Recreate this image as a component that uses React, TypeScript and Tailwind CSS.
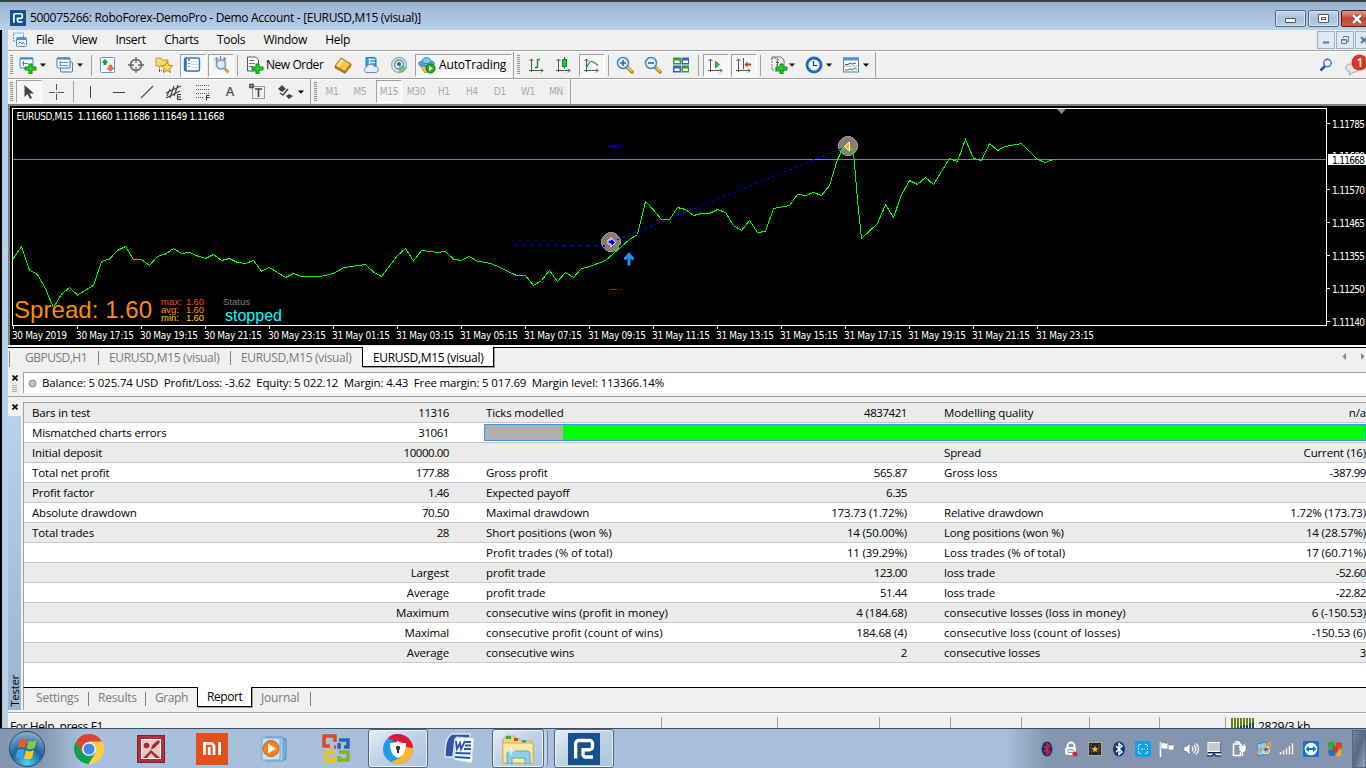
import type { ReactNode } from "react";

// ── Data ──────────────────────────────────────────────────────

const MENU = ["File", "View", "Insert", "Charts", "Tools", "Window", "Help"];

const PERIODS = ["M1", "M5", "M15", "M30", "H1", "H4", "D1", "W1", "MN"];

const REPORT: string[][] = [
  ["Bars in test", "11316", "Ticks modelled", "4837421", "Modelling quality", "n/a"],
  ["Mismatched charts errors", "31061", "", "", "", ""],
  ["Initial deposit", "10000.00", "", "", "Spread", "Current (16)"],
  ["Total net profit", "177.88", "Gross profit", "565.87", "Gross loss", "-387.99"],
  ["Profit factor", "1.46", "Expected payoff", "6.35", "", ""],
  ["Absolute drawdown", "70.50", "Maximal drawdown", "173.73 (1.72%)", "Relative drawdown", "1.72% (173.73)"],
  ["Total trades", "28", "Short positions (won %)", "14 (50.00%)", "Long positions (won %)", "14 (28.57%)"],
  ["", "", "Profit trades (% of total)", "11 (39.29%)", "Loss trades (% of total)", "17 (60.71%)"],
  ["", "Largest", "profit trade", "123.00", "loss trade", "-52.60"],
  ["", "Average", "profit trade", "51.44", "loss trade", "-22.82"],
  ["", "Maximum", "consecutive wins (profit in money)", "4 (184.68)", "consecutive losses (loss in money)", "6 (-150.53)"],
  ["", "Maximal", "consecutive profit (count of wins)", "184.68 (4)", "consecutive loss (count of losses)", "-150.53 (6)"],
  ["", "Average", "consecutive wins", "2", "consecutive losses", "3"],
];

const TIMES = [
  "30 May 2019", "30 May 17:15", "30 May 19:15", "30 May 21:15", "30 May 23:15", "31 May 01:15",
  "31 May 03:15", "31 May 05:15", "31 May 07:15", "31 May 09:15", "31 May 11:15", "31 May 13:15",
  "31 May 15:15", "31 May 17:15", "31 May 19:15", "31 May 21:15", "31 May 23:15",
];

const PRICES: [string, number][] = [
  ["1.11785", 124], ["1.11570", 190], ["1.11465", 223], ["1.11355", 256], ["1.11250", 289], ["1.11140", 322],
];

const LINE =
  "13,259 21.5,246.5 29.5,270 37.5,274.5 45.5,288.5 53.5,308 61.5,294 69.5,287.5 77.5,295 93.5,285.5 101.5,261.5 109.5,259 117.5,250.5 125.5,246.5 133.5,259.5 141.5,259.5 149.5,265.5 157.5,256.5 165.5,254 173.5,248.5 181.5,253.5 189.5,252.5 197.5,256 205.5,258.5 213.5,254.5 221.5,260.5 229.5,258.5 237.5,262.5 245.5,263.5 253.5,260.5 261.5,271 269.5,267.5 285.5,277.5 293.5,273.5 301.5,276.5 320,276.5 333.5,273.5 344,267.5 365.5,264.5 373.5,272 381.5,276.5 397.5,255.5 405.5,248.5 413.5,261 421.5,250.5 437.5,252.5 445.5,251.5 453.5,259 461,260.5 469,256.5 477,261 491,263.5 500,267.5 516.5,275.5 525.5,275.5 533.5,285.5 541.5,280.5 549.5,270.5 557.5,281.5 565.5,272.5 573.5,277.5 581.5,268.5 590,266.5 605.5,260.5 621.5,246.5 629.5,239.5 637.5,234.5 645.5,201.5 653.5,210 661.5,219.5 669.5,219.5 677.5,207.5 685.5,209.5 693.5,215.5 701.5,213.5 709.5,213.5 717.5,209.5 725.5,212.5 733.5,225.5 741.5,230.5 749.5,220.5 757.5,232.5 765.5,231.5 773.5,208.5 789.5,205.5 797.5,194.5 805.5,195.5 813.5,192.5 821.5,195.5 829.5,185.5 837.5,159.5 843.5,147.5 850,147.5 853.5,151.5 857.5,200 861.5,238.5 877.5,223.5 885.5,204.5 893.5,217.5 901.5,195 909.5,180.5 917.5,184.5 925.5,177.5 933.5,184.5 949.5,158.5 957.5,161.5 965.5,139.5 973.5,158.5 981.5,160.5 989.5,143.5 997.5,150.5 1005,146.5 1021.5,143.5 1037.5,159.5 1045.5,162.5 1053,159.5";

// ── Small building blocks ─────────────────────────────────────

function Ico({ className = "", size = 18, children }: { className?: string; size?: number; children: ReactNode }) {
  return (
    <svg width={size} height={size} viewBox={`0 0 ${size} ${size}`} fill="none" className={`shrink-0 ${className}`}>
      {children}
    </svg>
  );
}

function Grip({ className = "" }: { className?: string }) {
  return (
    <svg width="3" height="20" className={`shrink-0 ${className}`}>
      <path d="M1.5 0V20" stroke="#909090" strokeWidth="3" strokeDasharray="1 1" />
    </svg>
  );
}

function Sep({ className = "" }: { className?: string }) {
  return <div className={`h-[21px] w-px shrink-0 bg-[#a0a0a0] ${className}`} />;
}

function Caret({ className = "" }: { className?: string }) {
  return (
    <svg width="6" height="4" className={`shrink-0 ${className}`}>
      <path d="M0 .5H6L3 3.8Z" fill="#000" />
    </svg>
  );
}

function Pressed({ className = "", children }: { className?: string; children: ReactNode }) {
  return (
    <div className={`flex h-[23px] shrink-0 items-center justify-center border border-t-[#a0a0a0] border-r-white border-b-white border-l-[#a0a0a0] bg-[#f6f6f6] ${className}`}>
      {children}
    </div>
  );
}

const PLUS = "M10 8h3v3h4v3h-4v4h-3v-4H6v-3h4z";

function Plus() {
  return <path d={PLUS} fill="#25d325" stroke="#07890b" strokeWidth="1" />;
}

// L shaped axes shared by the chart type buttons
function Axes() {
  return <path d="M3.500 3v13M1 14.500h14M1.500 5l2-2 2 2M13 12.500l2 2-2 2" stroke="#555" />;
}

function RLogo({ size }: { size: number }) {
  return (
    <svg width={size} height={size} viewBox="0 0 32 32" className="shrink-0">
      <rect width="32" height="32" rx="1" fill="#15518f" />
      <path
        d="M7.700 25.500V10.500a3 3 0 0 1 3-3H21.500a3 3 0 0 1 3 3v3.300a3 3 0 0 1-3 3H15V21.500a2.500 2.500 0 0 0 2.500 2.500H25"
        fill="none"
        stroke="#fff"
        strokeWidth="3.400"
      />
    </svg>
  );
}

function Magnifier({ minus = false }: { minus?: boolean }) {
  return (
    <>
      <path d="M11 11l5 5" stroke="#b8860b" strokeWidth="3.500" strokeLinecap="round" />
      <path d="M11.500 11l4.500 4.500" stroke="#f6d35a" strokeWidth="1.500" />
      <circle cx="7" cy="7" r="5.500" fill="#e4f2ff" stroke="#3b86d6" strokeWidth="1.500" />
      <path d={minus ? "M4 7h6" : "M4 7h6M7 4v6"} stroke="#2468b8" strokeWidth="1.600" />
    </>
  );
}

// ── Window chrome ─────────────────────────────────────────────

function TitleBar() {
  return (
    <div className="flex h-[30px] shrink-0 border-t-2 border-[#3a4048] bg-linear-to-b from-[#98b3d1] to-[#b9d1ea]">
      <div className="ml-[10px] flex h-[32px] items-center">
        <RLogo size={16} />
        <span className="ml-1 whitespace-nowrap text-[12px] tracking-[-0.32px]">
          500075266: RoboForex-DemoPro - Demo Account - [EURUSD,M15 (visual)]
        </span>
      </div>
      <div className="-mr-[7px] ml-auto mt-2 flex gap-[2px]">
        <div className="flex h-[17px] w-[31px] items-center justify-center rounded-[2px] border border-[#56687e] bg-linear-to-b from-[#c4d7ea] via-[#a9c1dc] to-[#b6cfe9] shadow-[inset_0_0_0_1px_#d5e4f2]">
          <div className="mt-1 h-[5px] w-[11px] rounded-[1px] border border-[#555] bg-white" />
        </div>
        <div className="flex h-[17px] w-[31px] items-center justify-center rounded-[2px] border border-[#56687e] bg-linear-to-b from-[#c4d7ea] via-[#a9c1dc] to-[#b6cfe9] shadow-[inset_0_0_0_1px_#d5e4f2]">
          <div className="flex h-[9px] w-[11px] items-center justify-center rounded-[1px] border border-[#555] bg-white">
            <div className="h-[3px] w-[5px] border border-[#555]" />
          </div>
        </div>
        <div className="flex h-[17px] w-[32px] items-center justify-center rounded-[2px] border border-[#5b1a14] bg-linear-to-b from-[#dd9a8c] via-[#c5432d] to-[#d0604a]">
          <svg width="12" height="10" viewBox="0 0 12 10">
            <path d="M2 1l8 8M10 1L2 9" stroke="#444" strokeWidth="4" />
            <path d="M2 1l8 8M10 1L2 9" stroke="#fff" strokeWidth="2.500" />
          </svg>
        </div>
      </div>
    </div>
  );
}

function MdiButton({ children }: { children: ReactNode }) {
  return (
    <div className="flex h-[18px] w-[18px] items-center justify-center border border-[#9aaec0] bg-[#dfe9f3]">
      <svg width="10" height="10" fill="none" stroke="#65788c">{children}</svg>
    </div>
  );
}

function MenuBar() {
  return (
    <div className="flex h-[21px] shrink-0 items-center border-b border-[#a0a0a0]">
      <Ico size={16} className="ml-1">
        <rect x="1.500" y="1" width="10" height="8" fill="#eaf3ff" stroke="#4f8fe0" strokeDasharray="2 1" />
        <rect x="4.500" y="5.500" width="10" height="9" rx="1" fill="#fff" stroke="#4f8fe0" />
        <path d="M5 7h9" stroke="#4f8fe0" strokeWidth="2" />
        <path d="M6 12l2-2 2 2 1-2 2 3" stroke="#4f8fe0" />
      </Ico>
      <div className="ml-2 flex gap-[18.5px] text-[12px] tracking-[-0.35px]">
        {MENU.map(m => <span key={m}>{m}</span>)}
      </div>
      <div className="-mr-[7px] ml-auto flex gap-px">
        <MdiButton><path d="M2 7.500h6" strokeWidth="2" /></MdiButton>
        <MdiButton><path d="M3.500 3V1.500h5v5H7M1.500 4.500h5v4h-5zM1 5h6" /></MdiButton>
        <MdiButton><path d="M2 2l6 6M8 2L2 8" strokeWidth="2" /></MdiButton>
      </div>
    </div>
  );
}

function MainToolbar() {
  return (
    <div className="flex h-[27px] shrink-0 items-center border-t border-white pr-px">
      <Grip className="ml-[2px]" />
      <Ico className="ml-[6px]">
        <rect x="1" y="2" width="13" height="10" rx="1" fill="#f4faff" stroke="#3d8ac7" />
        <path d="M1 2.500h13" stroke="#3d8ac7" strokeWidth="2" />
        <path d="M4.500 5v5M3 7.500h6" stroke="#5580a5" />
        <Plus />
      </Ico>
      <Caret className="ml-[3px]" />
      <Ico className="ml-[10px]">
        <rect x="4.500" y="6" width="12" height="10" rx="1" fill="#e4f1ff" stroke="#3d7fc0" />
        <rect x="1" y="2" width="13" height="10" rx="1" fill="#f4faff" stroke="#3d7fc0" />
        <path d="M1 2.500h13" stroke="#3d8ac7" strokeWidth="2" />
        <path d="M4.500 5v5M3 6.500h9M3 9.500h9" stroke="#7090b5" />
      </Ico>
      <Caret className="ml-[3px]" />
      <Sep className="ml-[8px]" />
      <Ico className="ml-[7px]">
        <rect x="1.500" y="1.500" width="14" height="15" rx="1" fill="#fff" stroke="#5c98d4" />
        <path d="M3 4h11M3 7h11M3 10h11M3 13h11" stroke="#d8e6f5" />
        <path d="M6 3l3.500 3.500H7.500v2.500h-3V6.500H2.500z" fill="#18a32b" />
        <path d="M11.500 15.500L8 12h2V9h3v3h2z" fill="#f17a4b" stroke="#cf481e" strokeWidth=".6" />
      </Ico>
      <Ico className="ml-[10px]">
        <circle cx="9" cy="9" r="5.500" stroke="#666" strokeWidth="1.500" />
        <path d="M9 1v6M9 11v6M1 9h6M11 9h6" stroke="#666" strokeWidth="1.300" />
      </Ico>
      <Ico className="ml-[10px]">
        <path d="M1 2h5l1 2h6v6H1z" fill="#f7dc70" stroke="#c99a1e" />
        <path d="M4.500 11v6M4 14.500h5" stroke="#555" strokeDasharray="1 1" />
        <path d="M12 5.500l1.700 3.700 4 .5-3 2.700.8 4.100-3.500-2-3.500 2 .8-4.100-3-2.700 4-.5z" fill="#fbdc55" stroke="#b9851c" />
      </Ico>
      <Pressed className="ml-[7px] w-[26px]">
        <Ico className="-ml-[2px]">
          <rect x="1.500" y="2" width="15" height="13" rx="1.500" fill="#fff" stroke="#2f77bd" strokeWidth="1.400" />
          <path d="M2.500 2.500v12" stroke="#2f77bd" strokeWidth="2.500" />
          <path d="M6 4v9" stroke="#222" strokeDasharray="1 2" />
          <path d="M5 3.500h2" stroke="#e33" />
          <path d="M8 5.500h8M8 8.500h8M8 11.500h8" stroke="#cfe0f3" />
        </Ico>
      </Pressed>
      <Pressed className="ml-[2px] w-[26px]">
        <Ico>
          <path d="M2 1h13v11H2z" fill="#ececec" />
          <path d="M4.500 1v9M8.500 0v5M12.500 1v8M2.500 3h4M10.500 3h4" stroke="#8a8a8a" strokeWidth="1.200" />
          <path d="M12.500 12.500l4 4" stroke="#d39a20" strokeWidth="2.800" />
          <circle cx="9" cy="8.500" r="4.500" fill="#d8ebfc" fillOpacity=".9" stroke="#6b9fd0" strokeWidth="1.500" />
        </Ico>
      </Pressed>
      <Sep className="ml-[3px]" />
      <Ico className="ml-2">
        <path d="M1.500 1h8l3 3v11h-11z" fill="#fff" stroke="#555" />
        <path d="M3 4.500h5M3 7.500h6M3 10.500h4" stroke="#777" />
        <Plus />
      </Ico>
      <span className="ml-[2px] w-[58px] whitespace-nowrap text-[12px] tracking-[-0.45px]">New Order</span>
      <Ico className="ml-[10px]">
        <path d="M1 10L7 2l10 6-6 8z" fill="#f4c449" stroke="#a86a0c" />
        <path d="M1 10v2l10 5.500 6-7.500V8l-6 7.500z" fill="#c47f14" stroke="#96600d" strokeWidth=".6" />
        <path d="M7 3l3 1.800L5 11 2.500 9.500z" fill="#fbe28b" />
      </Ico>
      <Ico className="ml-[10px]">
        <path d="M4 1.500h9l1 1v8H4z" fill="#2f9be8" stroke="#1e78c4" />
        <path d="M7.500 2v7M8 3.500h5M8 6.500h5" stroke="#d6efff" strokeWidth="1.500" />
        <path d="M4 16.500a3 3 0 0 1 .5-5.500 4.500 4.500 0 0 1 8-.5 3 3 0 0 1 1.500 6z" fill="#e6edf8" stroke="#7289b5" />
      </Ico>
      <Ico className="ml-[10px]">
        <circle cx="9" cy="9" r="7.500" fill="#e0efdf" stroke="#94b8b0" strokeWidth="1.300" />
        <circle cx="9" cy="8.500" r="4.500" stroke="#5889b8" strokeWidth="1.300" />
        <circle cx="9" cy="8" r="2" fill="#2e68aa" />
        <path d="M9 9v8c4 0 7-3 8-6z" fill="#52b053" fillOpacity=".6" />
      </Ico>
      <Pressed className="ml-[7px] w-[97px] justify-start">
        <Ico className="ml-[2px]">
          <path d="M1 8l15 0-4 7-5 2z" fill="#f3cd53" stroke="#c0962c" />
          <ellipse cx="8.500" cy="7.500" rx="8" ry="3" fill="#52a9da" stroke="#2d82b8" />
          <path d="M4 6c0-6 9-6 9 0-2 2-7 2-9 0z" fill="#80caf0" stroke="#2d82b8" />
          <circle cx="12.500" cy="12.500" r="4.600" fill="#1cb01c" stroke="#087c0d" />
          <path d="M11 9.900v5.200l4-2.600z" fill="#fff" />
        </Ico>
        <span className="ml-[3px] whitespace-nowrap text-[12px] tracking-[-0.15px]">AutoTrading</span>
      </Pressed>
      <div className="ml-px h-[26px] w-px bg-[#a0a0a0]" />
      <Grip className="ml-[3px]" />
      <Ico className="ml-2"><Axes /><path d="M9.500 3v9M9.500 3.500H12M7 11.500h2.500" stroke="#1d8a2a" strokeWidth="1.400" /></Ico>
      <Ico className="ml-[9px]"><Axes /><path d="M9.500 1v12" stroke="#138a22" /><rect x="7.500" y="3.500" width="4" height="7" fill="#29c53a" stroke="#138a22" /></Ico>
      <Pressed className="ml-[6px] w-[26px]"><Ico><Axes /><path d="M3.500 12C7 3 9 4 15 9.500" stroke="#2f9a3c" strokeWidth="1.300" /></Ico></Pressed>
      <Sep className="ml-[3px]" />
      <Ico className="ml-[7px]"><Magnifier /></Ico>
      <Ico className="ml-[10px]"><Magnifier minus /></Ico>
      <Ico className="ml-[10px]">
        <path d="M1 1.500h8v7H1zM9.500 9.500h7.500v7H9.500z" fill="#3d9a2c" />
        <path d="M9.500 1.500h7.500v7H9.500zM1 9.500h8v7H1z" fill="#3563c9" />
        <path d="M2.500 4.500h5v2.500h-5zM11 4.500h5v2.500h-5zM2.500 12.500h5V15h-5zM11 12.500h5V15h-5z" fill="#fff" />
      </Ico>
      <Sep className="ml-2" />
      <Pressed className="ml-1 w-[26px]"><Ico><Axes /><path d="M8.500 5v7l4-3.500z" fill="#2cc03c" stroke="#138a22" strokeWidth=".7" /></Ico></Pressed>
      <Pressed className="ml-[2px] w-[26px]"><Ico><Axes /><path d="M8.500 2v11" stroke="#555" /><path d="M9.500 8.500l3-3v2h3.500v2h-3.500v2z" fill="#c33a1a" /></Ico></Pressed>
      <Sep className="ml-[3px]" />
      <Ico className="ml-[9px]">
        <path d="M2 4V1h9l3 3v11H5" fill="#fff" stroke="#666" />
        <path d="M2 2v12h5V2z" fill="#eee" stroke="#777" strokeDasharray="2 1" />
        <path d="M9.500 3.500c-2-1-2 1-2 2v5M6 6.500h3" stroke="#555" />
        <Plus />
      </Ico>
      <Caret className="ml-px" />
      <Ico className="ml-[10px]">
        <circle cx="9" cy="9" r="7" fill="#f8fcff" stroke="#1f68bd" strokeWidth="2.800" />
        <circle cx="9" cy="9" r="5" stroke="#8fb7dc" strokeWidth=".8" strokeDasharray="1 1.600" />
        <path d="M8.500 5v4.500H12" stroke="#333" strokeWidth="1.200" />
      </Ico>
      <Caret className="ml-[3px]" />
      <Ico className="ml-[10px]">
        <rect x="1.500" y="2" width="15" height="14" fill="#f7fbff" stroke="#4284c4" />
        <path d="M1 3h16" stroke="#4b97dc" strokeWidth="3" />
        <path d="M3 8.500h3l2-1.500 2 1 4-1" stroke="#a23a22" />
        <path d="M2 10h14" stroke="#9cb8d4" />
        <path d="M3 14h3l2-1.500 2 1.500 3-2 2 1.500" stroke="#2b8a37" />
      </Ico>
      <Caret className="ml-[3px]" />
      <div className="ml-[6px] h-[26px] w-px bg-[#a0a0a0]" />
      <Ico size={14} className="ml-auto mr-[11px]">
        <path d="M1.500 12.500L6 8" stroke="#2353c3" strokeWidth="2.500" />
        <circle cx="8.500" cy="5" r="3.700" fill="#f1f5ff" stroke="#3d6fda" strokeWidth="1.400" />
      </Ico>
      <svg width="22" height="22" viewBox="0 0 22 22" className="-mr-px shrink-0 overflow-hidden">
        <path d="M7 10c-6-1-8 7-1 8l-1 3 5-3c4 0 5-2 5-4z" fill="#e3e3e3" stroke="#aaa" />
        <circle cx="15.500" cy="8.500" r="8" fill="#dc3420" />
        <text x="12.500" y="13" fontSize="12" fill="#fff" fontFamily="Open Sans, sans-serif" fontWeight="600">1</text>
      </svg>
    </div>
  );
}

function DrawToolbar() {
  return (
    <div className="flex h-[26px] shrink-0 items-center border-t border-[#a0a0a0] shadow-[inset_0_1px_0_#fff]">
      <Grip className="ml-[2px]" />
      <Pressed className="ml-[3px] w-[26px]">
        <Ico className="-ml-px"><path d="M4.500 2v12l3-3 2.500 5 2-1-2.500-4.500H14z" fill="#444" /></Ico>
      </Pressed>
      <Ico className="ml-[6px]"><path d="M8.500 1v6M8.500 11v6M1 9.500h6M10 9.500h6M8.500 9v1" stroke="#555" /></Ico>
      <Sep className="ml-[7px]" />
      <Ico className="ml-2"><path d="M8.500 3v12" stroke="#444" /></Ico>
      <Ico className="ml-[10px]"><path d="M3 9.500h12" stroke="#444" /></Ico>
      <Ico className="ml-[10px]"><path d="M3 15L15 3" stroke="#555" strokeWidth="1.200" /></Ico>
      <Ico className="ml-[9px]">
        <path d="M1 10l15-7M1 15L15 8M5 15L9 3M9 13l4-11M2 13l3-7" stroke="#444" strokeWidth="1.200" />
        <path d="M16 11.500h-3.500v5H16M12.500 14H16" stroke="#333" />
      </Ico>
      <Ico className="ml-[11px]">
        <path d="M2 2.500h13M2 6.500h13M2 10.500h13M2 14.500h8" stroke="#555" strokeDasharray="1 1" />
        <path d="M15.500 12.500h-3v5M12.500 14.500h3" stroke="#333" />
      </Ico>
      <span className="ml-[10px] w-[16px] text-center text-[13px] font-semibold text-[#555]">A</span>
      <Ico className="ml-[11px]">
        <rect x="3.500" y="3.500" width="12" height="12" stroke="#444" strokeDasharray="1 1" />
        <path d="M1 1.500h3v3H1zM6 6h7M9.500 6v8" stroke="#444" strokeWidth="1.600" />
      </Ico>
      <Ico className="ml-[10px]">
        <path d="M1 6l4-4 4 4-4 3zM9 13l3-2 4 2-4 3z" fill="#444" />
        <path d="M3 10l3 2 5-6" stroke="#444" strokeWidth="1.500" />
      </Ico>
      <Caret className="ml-[3px]" />
      <div className="ml-[6px] h-[25px] w-px bg-[#a0a0a0]" />
      <Grip className="ml-[3px]" />
      <div className="ml-px flex font-['DejaVu_Sans_Condensed','DejaVu_Sans',sans-serif] text-[10px] tracking-[-0.2px] text-[#a9a9a9]">
        {PERIODS.map(p =>
          p === "M15" ? (
            <Pressed key={p} className="ml-[2px] w-[26px]">{p}</Pressed>
          ) : (
            <div key={p} className="flex w-7 items-center justify-center">{p}</div>
          )
        )}
      </div>
      <div className="h-[25px] w-px bg-[#a0a0a0]" />
    </div>
  );
}

// ── Chart ─────────────────────────────────────────────────────

function Chart() {
  return (
    <svg width="1358" height="243" viewBox="8 104 1358 243" className="block shrink-0" fontFamily="DejaVu Sans Condensed, DejaVu Sans, sans-serif" fontSize="10">
      <rect x="8" y="104" width="1358" height="243" fill="#808080" />
      <rect x="10" y="106" width="1356" height="239" fill="#000" />
      <path d="M8 345.500H1366" stroke="#f0f0f0" />
      <path d="M8 346.500H1366" stroke="#fff" />
      <path d="M12.500 325.500V108.500H1326.500V325.500H12" fill="none" stroke="#fff" shapeRendering="crispEdges" />
      <path d="M13 159.500H1326" stroke="#778899" />
      <path d="M1057 109h9l-4.500 5z" fill="#778899" />

      <g shapeRendering="crispEdges" fill="none">
        <circle cx="611" cy="242" r="9.500" fill="#8f7b69" stroke="#8796a5" />
        <circle cx="848" cy="146" r="9.500" fill="#8f7b69" stroke="#8796a5" />
        <path d="M515 245H559" stroke="#0000ff" strokeWidth="2" strokeDasharray="2 6" />
        <path d="M563 246H620" stroke="#0000ff" strokeWidth="2" strokeDasharray="2 6" />
        <path d="M611 242.500L848 146" stroke="#0000ff" strokeDasharray="3 3" />
        <polyline points={LINE} stroke="#00ff00" />
        <path d="M610 146.500h7" stroke="#0000ff" />
        <path d="M610 289.500h7" stroke="#ff0000" />
      </g>
      <path d="M608 240h3v-2.500l4.500 5-4.500 4.500v-3h-3z" fill="#00f" stroke="#fff" />
      <path d="M849.500 142v9l-5-4.500z" fill="#ffa500" stroke="#fff" />
      <path d="M629 265.500V254M624.500 259.500l4.500-5 4.500 5" fill="none" stroke="#1e90ff" strokeWidth="3" />

      <text x="16.500" y="120" fill="#fff" textLength="208" xmlSpace="preserve">EURUSD,M15  1.11660 1.11686 1.11649 1.11668</text>
      <g fontFamily="Liberation Sans, sans-serif">
        <text x="14" y="318" fill="#ff8c00" fontSize="24" textLength="138">Spread: 1.60</text>
        <g fontSize="9.500">
          <text x="161" y="305" fill="#ff4500" textLength="21">max:</text>
          <text x="186" y="305" fill="#ff4500" textLength="18">1.60</text>
          <text x="161" y="313" fill="#ff8c00" textLength="18">avg:</text>
          <text x="186" y="313" fill="#ff8c00" textLength="18">1.60</text>
          <text x="161" y="321" fill="#ffd700" textLength="18">min:</text>
          <text x="186" y="321" fill="#ffd700" textLength="18">1.60</text>
          <text x="223" y="305" fill="#808080" textLength="27">Status</text>
        </g>
        <text x="225" y="321" fill="#00ffff" fontSize="16" textLength="57">stopped</text>
      </g>

      {TIMES.map((t, i) => (
        <g key={i}>
          <path d={`M${13.5 + i * 64} 326v3`} stroke="#fff" />
          <text x={12 + i * 64} y="338.500" fill="#fff" textLength={i === 0 ? 55 : 58}>{t}</text>
        </g>
      ))}
      {PRICES.map(([p, y]) => (
        <g key={p}>
          <path d={`M1327 ${y - 0.5}h3`} stroke="#fff" />
          <text x="1332" y={y + 3.5} fill="#fff" textLength="33">{p}</text>
        </g>
      ))}
      <text x="1332" y="160" fill="#fff" textLength="33">1.11680</text>
      <rect x="1328" y="154" width="38" height="11" fill="#fff" />
      <text x="1332" y="163.500" fill="#000" textLength="33">1.11668</text>
    </svg>
  );
}

function ChartTabs() {
  return (
    <div className="flex h-[25px] shrink-0 items-start border-t border-black text-[12px] tracking-[-0.32px] text-[#7a7a7a]">
      <div className="ml-px mt-[3px] h-[16px] w-px bg-[#808080]" />
      <span className="ml-[15px] w-[73px] whitespace-nowrap leading-[20px] tracking-[-0.5px]">GBPUSD,H1</span>
      <div className="mt-[3px] h-[14px] w-px bg-[#808080]" />
      <span className="w-[131px] whitespace-nowrap pl-[10px] leading-[20px]">EURUSD,M15 (visual)</span>
      <div className="mt-[3px] h-[14px] w-px bg-[#808080]" />
      <span className="w-[131px] whitespace-nowrap pl-[10px] leading-[20px]">EURUSD,M15 (visual)</span>
      <div className="-mt-px h-[20px] w-[132px] border border-t-0 border-black bg-white pl-[10px] leading-[21px] whitespace-nowrap text-black shadow-[1px_1px_0_#999]">
        EURUSD,M15 (visual)
      </div>
      <svg width="24" height="8" className="ml-auto mt-[5px]">
        <path d="M4 0v7L.5 3.500zM19 0v7l3.500-3.500z" fill="#888" />
      </svg>
    </div>
  );
}

function CloseX() {
  return (
    <svg width="6" height="6" className="block">
      <path d="M.5 .5l5 5M5.500 .5l-5 5" stroke="#000" strokeWidth="1.600" />
    </svg>
  );
}

function BalanceBar() {
  return (
    <div className="flex h-[25px] shrink-0 items-stretch border-b border-[#a0a0a0]">
      <div className="w-[15px] pl-1 pt-[3px]">
        <CloseX />
        <svg width="5" height="8" className="mt-1 block"><path d="M0 .5h5M0 2.500h5M0 4.500h5M0 6.500h5" stroke="#aaa" /></svg>
      </div>
      <div className="mb-[3px] flex flex-1 items-center border-t border-l border-[#a0a0a0] bg-white">
        <svg width="9" height="9" className="ml-[4px]"><circle cx="4.500" cy="4.500" r="3.500" fill="#c5c5c5" stroke="#888" /></svg>
        <pre className="ml-[5px] font-['Open_Sans',sans-serif] text-[11.5px] tracking-[-0.17px]">
          {"Balance: 5 025.74 USD  Profit/Loss: -3.62  Equity: 5 022.12  Margin: 4.43  Free margin: 5 017.69  Margin level: 113366.14%"}
        </pre>
      </div>
    </div>
  );
}

// ── Strategy tester ───────────────────────────────────────────

// bare numbers are set tighter than captions, long captions a little looser
function spacing(s: string) {
  if (/^-?[\d.]+$/.test(s)) return "tracking-[-0.45px]";
  return s.length > 22 && s[0] !== "M" ? "tracking-[-0.02px]" : "tracking-[-0.15px]";
}

function Pair({ label, value, className = "" }: { label: string; value: string; className?: string }) {
  return (
    <div className={`flex justify-between ${className}`}>
      <span className={spacing(label)}>{label}</span>
      <span className={spacing(value)}>{value}</span>
    </div>
  );
}

function Tester() {
  return (
    <div className="flex h-[315px] shrink-0 pt-[5px]">
      <div className="flex w-[15px] shrink-0 flex-col">
        <div className="h-[14px] pl-1 pt-[2px]"><CloseX /></div>
        <div className="flex h-[294px] w-[13px] items-end justify-center bg-linear-to-b from-[#b9d1ea] to-[#99b4d1] pb-[3px]">
          <span className="rotate-180 text-[11.5px] leading-[13px] tracking-[-0.3px] [writing-mode:vertical-rl]">Tester</span>
        </div>
      </div>
      <div className="flex min-w-0 flex-1 flex-col">
        <div className="h-[285px] overflow-hidden border-l border-t border-[#a0a0a0] bg-white text-[11.5px]">
          {REPORT.map((row, i) => (
            <div
              key={i}
              className={`grid h-5 grid-cols-[425px_37px_421px_37px_422px] items-center whitespace-nowrap border-b border-[#c8c8c8] leading-[18px] ${i % 2 ? "bg-white" : "bg-[#ebebeb]"}`}
            >
              <Pair label={row[0]} value={row[1]} className="pl-2" />
              {i === 1 ? (
                <div className="col-span-4 ml-[35px] flex h-[17px] border border-[#3399ff] bg-[#00ff00]">
                  <div className="w-[78px] bg-[#b0b0b0]" />
                </div>
              ) : (
                <>
                  <div />
                  <Pair label={row[2]} value={row[3]} />
                  <div />
                  <Pair label={row[4]} value={row[5]} />
                </>
              )}
            </div>
          ))}
        </div>
        <div className="flex h-[23px] shrink-0 items-start border-t border-black border-l border-l-[#a0a0a0] text-[12px] leading-[19px] tracking-[-0.2px] text-[#7a7a7a]">
          <span className="w-[64px] pl-3">Settings</span>
          <div className="mt-1 h-[14px] w-px bg-[#808080]" />
          <span className="w-[56px] pl-[9px]">Results</span>
          <div className="mt-1 h-[14px] w-px bg-[#808080]" />
          <span className="w-[51px] pl-[9px] tracking-[-0.4px]">Graph</span>
          <div className="-mt-px h-[20px] w-[55px] border border-t-0 border-black bg-white pl-[9px] leading-[20px] tracking-[-0.4px] text-black shadow-[1px_1px_0_#999]">Report</div>
          <span className="w-[58px] pl-[9px]">Journal</span>
          <div className="mt-1 h-[14px] w-px bg-[#808080]" />
        </div>
      </div>
    </div>
  );
}

function StatusBar() {
  return (
    <div className="flex h-[17px] shrink-0 overflow-hidden border-t border-[#a0a0a0] text-[12px] leading-[27px] tracking-[-0.4px] shadow-[inset_0_1px_0_#fff]">
      <span className="w-[653px] pl-[2px]">For Help, press F1</span>
      {["w-[116px]", "w-[102px]", "w-[71px]", "w-[71px]", "w-[68px]", "w-[70px]", "w-[66px]"].map((w, i) => (
        <div key={i} className={`mt-1 shrink-0 border-l border-[#a0a0a0] ${w}`} />
      ))}
      <div className="mt-1 w-[6px] border-l border-[#a0a0a0]" />
      <svg width="23" height="12" className="mt-[5px]">
        <path d="M1 0v10M4 0v10M7 0v10M10 0v8M13 0v7M16 0v6M19 0v6M22 0v5" stroke="#6b8009" strokeWidth="2" />
        <path d="M7 9v3M10 8v4M13 7v5M16 6.500V12M19 5.500V12M22 4.500V12" stroke="#13475e" strokeWidth="2" />
      </svg>
      <span className="ml-1 whitespace-nowrap">2829/3 kb</span>
    </div>
  );
}

// ── Taskbar ───────────────────────────────────────────────────

function TaskButton({ className = "", children }: { className?: string; children: ReactNode }) {
  return (
    <div className={`flex h-[39px] shrink-0 items-center justify-center rounded-[3px] border border-[#52647c] bg-linear-to-br from-[#e4edf6] via-[#c0d1e4] to-[#adc4df] shadow-[inset_0_0_0_1px_#e9f1f9] ${className}`}>
      {children}
    </div>
  );
}

function TrayIcon({ children }: { children: ReactNode }) {
  return <svg width="24" height="16" viewBox="-4 0 24 16" fill="none" className="shrink-0">{children}</svg>;
}

function Bluetooth({ color }: { color: string }) {
  return <path d="M5 5l6 6-3 2.500v-11L11 5l-6 6" stroke={color} strokeWidth="1.400" />;
}

function Taskbar() {
  return (
    <div className="flex h-10 shrink-0 items-center overflow-hidden border-t border-[#3f4f63] bg-linear-to-r from-[#8496b0] from-[3%] via-[#a8c0dc] via-[6%] to-[#a8c0dc]">
      {/* start orb */}
      <svg width="38" height="38" viewBox="0 0 38 38" className="ml-2 shrink-0">
        <defs>
          <radialGradient id="orb" cx="50%" cy="90%" r="90%">
            <stop offset="0" stopColor="#4fd0f5" />
            <stop offset=".5" stopColor="#1a659e" />
            <stop offset="1" stopColor="#8fb4cc" />
          </radialGradient>
        </defs>
        <circle cx="19" cy="19" r="17.500" fill="url(#orb)" stroke="#2b4865" />
        <path d="M12 10c3-2 5-1 7 0l-2 8c-3-1-5-1-7 0z" fill="#ee5a24" />
        <path d="M20.500 10.500c3 1.500 5 1 8-.5l-2 8c-3 1.500-5 1.500-8 .5z" fill="#8dc63f" />
        <path d="M9.500 20c3-1.500 5-1 7 0l-2 8c-2-1-4-1-7 0z" fill="#3fa0e6" />
        <path d="M18 20.500c3 1.500 5 1 8-.5l-2 8c-3 1.500-5 1.500-8 .5z" fill="#fdc912" />
      </svg>
      {/* chrome */}
      <svg width="30" height="30" viewBox="0 0 30 30" className="ml-[28px] shrink-0">
        <circle cx="15" cy="15" r="15" fill="#ffcd40" />
        <path d="M2 7.500A15 15 0 0 1 28 7.500H15L8.500 18.800z" fill="#db4437" />
        <path d="M2 7.500A15 15 0 0 0 14.500 30L21.500 18.700 8.500 18.800z" fill="#0f9d58" />
        <circle cx="15" cy="15" r="7" fill="#f1f1f1" />
        <circle cx="15" cy="15" r="5.500" fill="#4285f4" />
      </svg>
      {/* picture manager */}
      <svg width="28" height="28" viewBox="0 0 28 28" className="ml-[33px] shrink-0">
        <rect x=".5" y=".5" width="27" height="27" fill="#b03038" stroke="#8c1d20" />
        <rect x="4.500" y="4.500" width="19" height="19" fill="#ecc9c9" stroke="#fff" />
        <path d="M6 23l8-8 9 8h-4l-5-5-4 5z" fill="#a52930" />
        <path d="M14 14.500l1-4L21 5l2 2-5.500 6z" fill="#a52930" />
        <circle cx="9.500" cy="10.500" r="2.800" fill="#a52930" />
      </svg>
      <div className="ml-[31px] flex h-8 w-8 shrink-0 items-center justify-center bg-[#e2501b]">
        <svg width="18" height="13" viewBox="0 0 18 13" fill="none" stroke="#fff" strokeWidth="2.800">
          <path d="M1.400 13V1.400H7.500a3.500 3.500 0 0 1 3.500 3.500V13M6.200 5v8M16.600 0v13" />
        </svg>
      </div>
      {/* media player */}
      <svg width="28" height="26" viewBox="0 0 28 26" className="ml-[33px] shrink-0">
        <path d="M7 1l18 2v20l-4 2z" fill="#7fb4d6" stroke="#4b8ab5" />
        <path d="M5 1h17v24H5z" fill="#a7d4ef" stroke="#5a9ac4" />
        <path d="M1 2h18v22H1z" fill="#c6e4f5" stroke="#6aa8d0" />
        <circle cx="10" cy="12.500" r="8" fill="#f4801f" stroke="#d3610d" />
        <path d="M7 7.500v10l8-5z" fill="#fff" />
      </svg>
      {/* office */}
      <svg width="28" height="30" viewBox="0 0 28 30" fill="none" strokeWidth="3.500" className="ml-[33px] shrink-0">
        <path d="M13 8V2H2v10h6M12 13h2" stroke="#dd4a20" />
        <path d="M17 6h9v7h-4M19 13h-2V9" stroke="#2563b5" />
        <path d="M12 18H4v9h8v-5" stroke="#f1c40f" />
        <path d="M17 18h9v8h-9v-4" stroke="#7fb51e" />
      </svg>
      <TaskButton className="ml-[18px] w-[60px]">
        <svg width="30" height="30" viewBox="0 0 30 30">
          <circle cx="15" cy="15" r="15" fill="#1d9cf0" />
          <path d="M5 4A15 15 0 0 1 30 15L21 14 12 8z" fill="#e3163c" />
          <path d="M30 14A15 15 0 0 1 8 28l9-4 6-11z" fill="#fdb627" />
          <path d="M15 7c3 2 5 2 8 2 0 9-3 13-8 15-5-2-8-6-8-15 3 0 5 0 8-2z" fill="#fff" />
          <circle cx="15" cy="14" r="2.200" fill="#333" />
          <path d="M14 14h2v5h-2z" fill="#333" />
        </svg>
      </TaskButton>
      {/* word */}
      <svg width="31" height="31" viewBox="0 0 31 31" className="ml-[16px] shrink-0">
        <path d="M8 1h18v5l-15 0-2 18H1C1 12 2 5 8 1z" fill="#2d55a5" stroke="#dbe6f5" strokeWidth="1.500" />
        <path d="M12 4l18 1-2 25-18-3z" fill="#f7f9fd" stroke="#c2cbdc" />
        <path d="M12 8l1 8 3-6 1 6 4-8" fill="none" stroke="#2a56a8" strokeWidth="1.800" />
        <path d="M21.500 9h5.500M21 12.500h6M20 16h7M11.500 20l15 .5M11 24l15 1" stroke="#2a56a8" strokeWidth="2" />
      </svg>
      {/* explorer */}
      <TaskButton className="ml-[17px] w-[52px]">
        <svg width="32" height="30" viewBox="0 0 32 30">
          <path d="M1 6l3-4h8l2 3h4l2 2h9l2 3v19H1z" fill="#efd67a" stroke="#c9a745" />
          <path d="M4 2h5v3H4z" fill="#2fb14a" /><path d="M12 4h4v3h-4z" fill="#d83b2a" /><path d="M20 6h4v3h-4z" fill="#3498db" />
          <path d="M1 9h30v20H1z" fill="#f9e9a4" stroke="#d2b455" />
          <path d="M5 30V20a3 3 0 0 1 3-3h17a3 3 0 0 1 3 3v10h-5v-6H10v6z" fill="#8fd0e6" stroke="#5aa9c8" />
          <path d="M9 13v8M5 17h8" stroke="#fff" />
        </svg>
      </TaskButton>
      <div className="h-[37px] w-[4px] rounded-r border-r border-[#70839c] bg-[#bfd1e5]" />
      <TaskButton className="ml-[6px] w-[60px]"><RLogo size={32} /></TaskButton>

      {/* tray */}
      <div className="ml-auto flex h-full items-center bg-linear-to-r from-[#a8c0dc] to-[#8496ae] to-[12%] pl-[30px]">
        <TrayIcon><ellipse cx="8" cy="8" rx="5.500" ry="7.500" fill="#12356d" /><Bluetooth color="#ee1730" /></TrayIcon>
        <TrayIcon>
          <path d="M4.500 8V5a3.500 3.500 0 0 1 7 0v3" stroke="#fff" strokeWidth="1.800" />
          <rect x="2" y="6" width="11" height="8" rx="3" fill="#f2f2f2" />
          <path d="M4 10c2-2 5-2 7 0M5 12c1.500-1 3-1 5 0" stroke="#777" />
          <circle cx="12" cy="13" r="2.500" fill="#c8283c" />
        </TrayIcon>
        <TrayIcon>
          <rect x="1.500" y="1.500" width="13" height="13" fill="#28241f" stroke="#aaa" />
          <path d="M4 3v10M12 3v10" stroke="#666" strokeDasharray="2 1" />
          <path d="M8 4.500l1 2.500 2.500.2-2 1.700.7 2.600L8 10l-2.200 1.500.7-2.600-2-1.700L7 7z" fill="#f5b223" />
        </TrayIcon>
        <TrayIcon><ellipse cx="8" cy="8" rx="6" ry="7.500" fill="#12386f" /><Bluetooth color="#fff" /></TrayIcon>
        <TrayIcon><rect width="16" height="16" rx="1" fill="#12a0ea" /><path d="M6 3.500H3.500v9H6M10 3.500h2.500v9H10M6 8h4" stroke="#c9efff" strokeDasharray="2 1" /></TrayIcon>
        <TrayIcon><path d="M1.500 1v15" stroke="#fff" strokeWidth="1.500" /><path d="M2 2c3-1 4 1 7 0v6c-3 1-4-1-7 0zM9 3.500c2 1 4 1 6 0v5c-2 1-4 1-6 0z" fill="#fff" stroke="#667" strokeWidth=".5" /></TrayIcon>
        <TrayIcon><path d="M1 5.500h2.500L7 2v12L3.500 10.500H1z" fill="#fff" stroke="#667" strokeWidth=".6" /><path d="M9 5.500q2 2.500 0 5M11 4q3.500 4 0 8M13 2.500q5 5.500 0 11" stroke="#fff" strokeWidth="1.200" /></TrayIcon>
        <TrayIcon><rect x="1" y="1.500" width="13.500" height="9" fill="#c7cad1" stroke="#fff" /><path d="M1 11.500h13V1M0 15h6v-2h2v2h6" stroke="#17166f" /><path d="M1 13.500h4M9 13.500h5" stroke="#fff" /></TrayIcon>
        <TrayIcon><path d="M2 3h8M4 1h4v2M2.500 3v11.500h7V11M9.500 3v2" stroke="#fff" strokeWidth="1.500" /><path d="M8 5.500h7M9 6h5v3l-2.500 2L9 9zM10 3v3M13 3v3M11.500 10v5" fill="#fff" stroke="#fff" strokeWidth="1.200" /></TrayIcon>
        <TrayIcon>
          <path d="M2 3l9-2 2 12-10 2z" fill="#8fc7ed" stroke="#3d86be" />
          <path d="M5 8l3-1 .5 3-3 .5zM9 7l3-.5.5 3-3 .5z" fill="#1b74bf" />
          <circle cx="11" cy="9" r="3.500" stroke="#e3f1fb" strokeWidth="1.300" />
          <path d="M2 12C7 9 11 6 15 1c1 5-1 9-5 11" stroke="#f0a43a" strokeWidth="1.600" />
        </TrayIcon>
        <TrayIcon><path d="M1.500 11.500v2M4.500 10v3.500M7.500 8v5.500M10.500 5.500v8M13.500 3v10.500" stroke="#5c6b7e" strokeWidth="3" /><path d="M1.500 11v2.500M4.500 9.500v4M7.500 7.500v6M10.500 5v8.500M13.500 2.500v11" stroke="#fff" strokeWidth="1.800" /></TrayIcon>
        <TrayIcon><rect width="16" height="16" rx="1" fill="#0f74dc" /><circle cx="8" cy="8" r="6.300" fill="#fff" /><path d="M2.500 8l3.500-3v2h4V5l3.500 3-3.500 3V9H6v2z" fill="#0f74dc" /></TrayIcon>
        <TrayIcon>
          <path d="M0 2l7-2 1 7-6 1z" fill="#3ca53a" /><path d="M9 1l6 1v5L9 8z" fill="#d8432b" />
          <path d="M1 9l6-1 1 7H2z" fill="#1d74c1" /><path d="M9 8l6 1-1 6H9z" fill="#e5ae20" />
          <path d="M7 4l5 4-3 5-4-5z" fill="#b4442b" />
        </TrayIcon>
        <div className="ml-[5px] h-[38px] w-[14px] border border-[#566881] bg-linear-to-br from-[#71829a] via-[#586a82] to-[#9aabc1]" />
      </div>
    </div>
  );
}

export default function App() {
  return (
    <div className="flex h-[768px] w-[1366px] flex-col overflow-hidden bg-[#f0f0f0] font-['Open_Sans',sans-serif] text-black">
      <TitleBar />
      <div className="flex h-[698px] shrink-0 overflow-hidden">
        <div className="w-2 shrink-0 border-l-2 border-black bg-[#b9d1ea]" />
        <div className="flex min-w-0 flex-1 flex-col overflow-hidden">
          <MenuBar />
          <MainToolbar />
          <DrawToolbar />
          <Chart />
          <ChartTabs />
          <BalanceBar />
          <Tester />
          <StatusBar />
        </div>
      </div>
      <Taskbar />
    </div>
  );
}
